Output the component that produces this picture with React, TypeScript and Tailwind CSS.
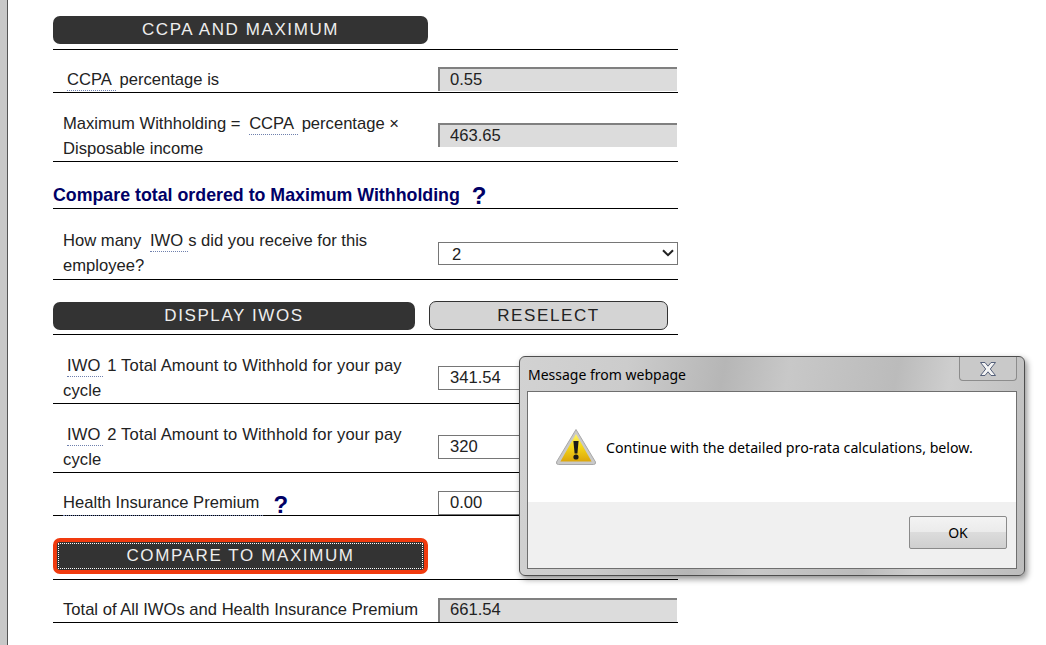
import type { ReactNode } from "react";

function Abbr({ children, className = "" }: { children: ReactNode; className?: string }) {
  return (
    <span className={`border-b border-dotted border-[#6f80ad] pb-[1px] ${className}`}>{children}</span>
  );
}

function Help({ className = "" }: { className?: string }) {
  return <span className={`font-bold text-[24px] leading-[20px] text-[#000066] ${className}`}>?</span>;
}

function Row({ h, children, input, text = "" }: { h: string; children: ReactNode; input: ReactNode; text?: string }) {
  return (
    <div className={`flex items-center border-b border-black ${h}`}>
      <div className={`w-[385px] shrink-0 pl-[10px] pr-[20px] leading-[25px] ${text}`}>{children}</div>
      <div className="flex-1">{input}</div>
    </div>
  );
}

function ReadOnly({ value, h = "h-[24px]" }: { value: string; h?: string }) {
  return (
    <input
      readOnly
      value={value}
      className={`block w-[239px] ${h} border-t-2 border-l-2 border-[#808080] bg-[#dcdcdc] pl-[10px] text-[#222] outline-none`}
    />
  );
}

function Editable({ value }: { value: string }) {
  return (
    <input
      readOnly
      value={value}
      className="block h-[24px] w-full border border-[#767676] bg-white pl-[11px] text-[#222] outline-none"
    />
  );
}

function WarningIcon() {
  return (
    <svg width="42" height="38" viewBox="0 0 42 38">
      <defs>
        <linearGradient id="warnFill" x1="0" y1="0" x2="0" y2="1">
          <stop offset="0" stopColor="#fff36a" />
          <stop offset="0.45" stopColor="#f5d81a" />
          <stop offset="1" stopColor="#dca60c" />
        </linearGradient>
      </defs>
      <path d="M21 1.5 L40.5 34 Q41 36.5 38.5 36.5 L3.5 36.5 Q1 36.5 1.5 34 Z" fill="#c9c9c9" stroke="#a8a8a8" strokeWidth="1" />
      <path d="M21 6 L36.6 33.4 L5.4 33.4 Z" fill="url(#warnFill)" />
      <path d="M18.4 13 L23.6 13 L22.4 25.5 L19.6 25.5 Z" fill="#1a1a1a" />
      <circle cx="21" cy="29" r="2.6" fill="#1a1a1a" />
    </svg>
  );
}

function Dialog() {
  return (
    <div className="absolute left-[519px] top-[356px] h-[220px] w-[506px] rounded-[6px] border border-[#4d4d4d] bg-[linear-gradient(100deg,#d2d2d2_0%,#cccccc_20%,#b6b6b6_38%,#c8c8c8_50%,#bbbbbb_70%,#cecece_80%,#bdbdbd_100%)] shadow-[2px_3px_6px_rgba(0,0,0,0.45)] [font-family:'Noto_Sans',sans-serif]">
      <div className="flex h-[34px] items-start justify-between pl-[8px] pr-[7px]">
        <span className="mt-[8px] text-[14px] leading-[19px] text-black">Message from webpage</span>
        <div className="flex h-[24px] w-[58px] items-center justify-center rounded-b-[4px] border border-t-0 border-[#8c8c8c] bg-[#c9c9c9]">
          <svg width="20" height="16" viewBox="0 0 20 16">
            <path d="M2.5 1.5 H7 L10 5.2 L13 1.5 H17.5 L12.3 8 L17.5 14.5 H13 L10 10.8 L7 14.5 H2.5 L7.7 8 Z" fill="#f4f4f4" stroke="#55607a" strokeWidth="1" strokeLinejoin="round" />
          </svg>
        </div>
      </div>
      <div className="mx-[7px] flex h-[178px] flex-col border border-[#6f6f6f] bg-white">
        <div className="flex h-[110px] items-center pl-[27px]">
          <WarningIcon />
          <span className="ml-[9px] mt-[2px] text-[14.2px] text-black">Continue with the detailed pro-rata calculations, below.</span>
        </div>
        <div className="flex flex-1 justify-end bg-[#f0f0f0] pt-[14px] pr-[9px]">
          <div className="flex h-[33px] w-[98px] items-center justify-center rounded-[2px] border border-[#8a8a8a] bg-[linear-gradient(#f3f3f3_0%,#ebebeb_48%,#dcdcdc_50%,#cfcfcf_100%)] text-[14px] text-black">
            OK
          </div>
        </div>
      </div>
    </div>
  );
}

export default function App() {
  return (
    <div className="relative flex h-[645px] w-[1046px] overflow-hidden bg-white text-[16.6px] text-[#222] [font-family:'Liberation_Sans',Arial,sans-serif]">
      <div className="h-full w-[8px] shrink-0 border-r border-[#555] bg-[#c8c8c8]" />

      <div className="ml-[45px] w-[625px] pt-[16px]">
        <div className="border-b border-black pb-[5px]">
          <button className="block h-[28px] w-[375px] rounded-[7px] bg-[#333] text-[17px] tracking-[1.6px] text-[#eee]">
            CCPA AND MAXIMUM
          </button>
        </div>

        <Row h="h-[43px] pt-[16px]" input={<ReadOnly value="0.55" />}>
          <Abbr className="ml-[4px] pr-[4px]">CCPA</Abbr>
          <span className="-ml-[1px]"> percentage is</span>
        </Row>

        <Row h="h-[69px] pt-[16px]" text="mt-[2px]" input={<ReadOnly value="463.65" />}>
          Maximum Withholding = <Abbr className="ml-[4px] pr-[4px]">CCPA</Abbr>
          <span className="-ml-[1px]"> percentage × Disposable income</span>
        </Row>

        <div className="flex h-[47px] items-center border-b border-black pt-[20px] text-[17.8px] font-bold text-[#000066]">
          Compare total ordered to Maximum Withholding
          <Help className="ml-[12px] mt-[2px]" />
        </div>

        <Row
          h="h-[71px] pt-[18px]"
          input={
            <div className="relative">
              <select className="block h-[23px] w-full appearance-none border border-[#767676] bg-white pl-[13px] text-[#222] outline-none">
                <option>2</option>
              </select>
              <svg className="absolute right-[4px] top-[7px]" width="12" height="8" viewBox="0 0 12 8">
                <path d="M1 1.2 L6 6.2 L11 1.2" fill="none" stroke="#222" strokeWidth="2" />
              </svg>
            </div>
          }
        >
          How many <Abbr className="ml-[4px] pr-[5px]">IWO</Abbr>s did you receive for this employee?
        </Row>

        <div className="flex h-[55px] items-end gap-[14px] border-b border-black pb-[4px]">
          <button className="h-[28px] w-[362px] rounded-[7px] bg-[#333] text-[17px] tracking-[1.6px] text-[#eee]">
            DISPLAY IWOS
          </button>
          <button className="h-[29px] w-[239px] rounded-[7px] border border-[#333] bg-[#d4d4d4] text-[17px] tracking-[1.6px] text-[#222]">
            RESELECT
          </button>
        </div>

        <Row h="h-[69px] pt-[18px]" text="tracking-[0.13px]" input={<Editable value="341.54" />}>
          <Abbr className="ml-[4px] pr-[2px]">IWO</Abbr> 1 Total Amount to Withhold for your pay cycle
        </Row>

        <Row h="h-[69px] pt-[18px]" text="tracking-[0.13px]" input={<Editable value="320" />}>
          <Abbr className="ml-[4px] pr-[2px]">IWO</Abbr> 2 Total Amount to Withhold for your pay cycle
        </Row>

        <Row h="h-[43px] pt-[18px]" input={<Editable value="0.00" />}>
          <div className="flex items-center">
            <span className="border-b border-dotted border-[#6f80ad] pr-[4px]">Health Insurance Premium</span>
            <Help className="ml-[10px] mt-[3px]" />
          </div>
        </Row>

        <div className="flex h-[64px] items-start border-b border-black pt-[22px]">
          <button className="h-[36px] w-[375px] rounded-[7px] border-[4px] border-[#f03a0e] bg-[#333] p-[1px] text-[17px] tracking-[1.6px] text-[#eee]">
            <span className="flex h-full items-center justify-center border border-dotted border-white">
              COMPARE TO MAXIMUM
            </span>
          </button>
        </div>

        <Row h="h-[43px] pt-[17px]" input={<ReadOnly value="661.54" />}>
          <span className="whitespace-nowrap">Total of All IWOs and Health Insurance Premium</span>
        </Row>
      </div>

      <Dialog />
    </div>
  );
}
